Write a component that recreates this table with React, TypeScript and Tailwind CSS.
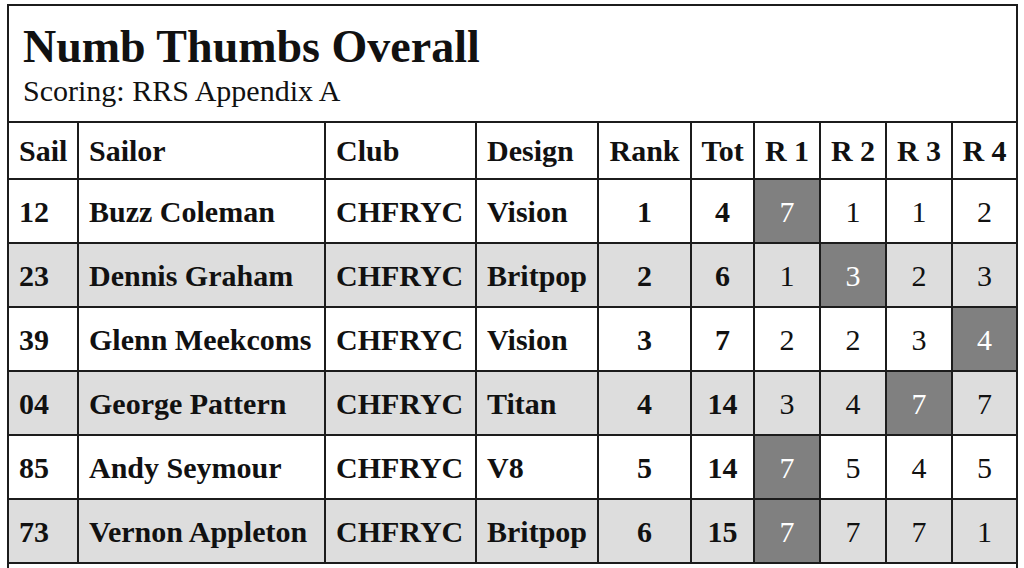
import React from "react";

const widths = [70, 247, 151, 122, 93, 63, 66, 66, 66, 63];

type Row = {
  sail: string;
  sailor: string;
  club: string;
  design: string;
  rank: string;
  tot: string;
  races: string[];
  drop: number;
};

const rows: Row[] = [
  { sail: "12", sailor: "Buzz Coleman", club: "CHFRYC", design: "Vision", rank: "1", tot: "4", races: ["7", "1", "1", "2"], drop: 0 },
  { sail: "23", sailor: "Dennis Graham", club: "CHFRYC", design: "Britpop", rank: "2", tot: "6", races: ["1", "3", "2", "3"], drop: 1 },
  { sail: "39", sailor: "Glenn Meekcoms", club: "CHFRYC", design: "Vision", rank: "3", tot: "7", races: ["2", "2", "3", "4"], drop: 3 },
  { sail: "04", sailor: "George Pattern", club: "CHFRYC", design: "Titan", rank: "4", tot: "14", races: ["3", "4", "7", "7"], drop: 2 },
  { sail: "85", sailor: "Andy Seymour", club: "CHFRYC", design: "V8", rank: "5", tot: "14", races: ["7", "5", "4", "5"], drop: 0 },
  { sail: "73", sailor: "Vernon Appleton", club: "CHFRYC", design: "Britpop", rank: "6", tot: "15", races: ["7", "7", "7", "1"], drop: 0 },
];

const headers = ["Sail", "Sailor", "Club", "Design", "Rank", "Tot", "R 1", "R 2", "R 3", "R 4"];

function Cell({
  i,
  children,
  className = "",
}: {
  i: number;
  children: React.ReactNode;
  className?: string;
}) {
  const left = i < 4;
  const last = i === widths.length - 1;
  return (
    <div
      className={`flex items-center shrink-0 ${left ? "justify-start pl-[10px]" : "justify-center"} ${
        last ? "" : "border-r-2 border-[#1c1c1c]"
      } ${className}`}
      style={{ width: widths[i] }}
    >
      {children}
    </div>
  );
}

export default function App() {
  return (
    <div
      className="w-[1024px] h-[568px] overflow-hidden bg-white text-[#111]"
      style={{ fontFamily: '"Liberation Serif", "Times New Roman", serif' }}
    >
      <div className="ml-[7px] mt-[4px] w-[1011px] border-2 border-[#1c1c1c]">
        <div className="h-[117px] border-b-2 border-[#1c1c1c] pl-[14px] pt-[16px]">
          <div className="text-[46px] font-bold leading-[50px]">Numb Thumbs Overall</div>
          <div className="text-[30px] leading-[34px] mt-[2px]">Scoring: RRS Appendix A</div>
        </div>
        <div className="flex h-[57px] border-b-2 border-[#1c1c1c] text-[30px] font-bold">
          {headers.map((h, i) => (
            <Cell key={h} i={i}>
              {h}
            </Cell>
          ))}
        </div>
        {rows.map((r, ri) => {
          const bg = ri % 2 === 1 ? "bg-[#dddddd]" : "bg-white";
          return (
            <div key={r.sail} className={`flex h-[64px] border-b-2 border-[#1c1c1c] text-[30px] ${bg}`}>
              <Cell i={0} className="font-bold">{r.sail}</Cell>
              <Cell i={1} className="font-bold">{r.sailor}</Cell>
              <Cell i={2} className="font-bold">{r.club}</Cell>
              <Cell i={3} className="font-bold">{r.design}</Cell>
              <Cell i={4} className="font-bold">{r.rank}</Cell>
              <Cell i={5} className="font-bold">{r.tot}</Cell>
              {r.races.map((v, k) => (
                <Cell
                  key={k}
                  i={6 + k}
                  className={k === r.drop ? "bg-[#808080] text-white" : ""}
                >
                  {v}
                </Cell>
              ))}
            </div>
          );
        })}
        <div className="h-[40px]" />
      </div>
    </div>
  );
}
